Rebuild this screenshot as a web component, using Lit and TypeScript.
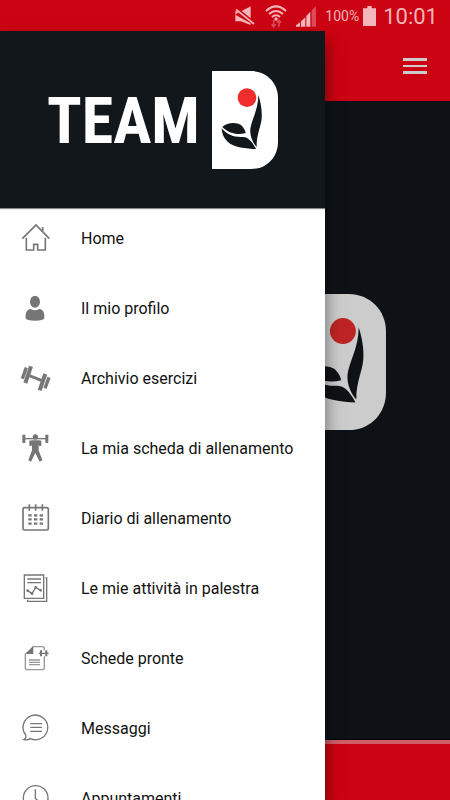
import { LitElement, html, svg, css, nothing } from "lit";
import { customElement, property } from "lit/decorators.js";

const menu = [
  { label: "Home", icon: svg`<path d="M4 47 45 6 85 47M16 44V81H38V64H50V81H73V44M65 12V26"/>` },
  {
    label: "Il mio profilo",
    icon: svg`<g class="solid"><ellipse cx="42" cy="26" rx="15" ry="18"/><path d="M14 76C13 57 18 49 29 48Q42 56 55 48C66 49 71 57 70 76Q68 83 42 83T14 76Z"/></g>`,
  },
  {
    label: "Archivio esercizi",
    icon: svg`<path stroke-width="10" d="M16 14 4 47"/><path stroke-width="12" d="M30 10 13 60M73 33 56 82"/><path stroke-width="9" d="M25 38 63 53"/><path stroke-width="10" d="M84 43 72 76"/>`,
  },
  {
    label: "La mia scheda di allenamento",
    icon: svg`<path stroke-width="4" d="M8 17H80"/><g class="solid"><rect x="4" y="5" width="9" height="25" rx="2"/><rect x="73" y="5" width="9" height="25" rx="2"/><circle cx="43" cy="12" r="8"/><path d="M25 23 33 22H53L61 23 61 38 55 40 53 34V52L64 82 56 86 43 60 30 86 22 82 33 52V34L31 40 25 38Z"/></g>`,
  },
  {
    label: "Diario di allenamento",
    icon: svg`<rect x="6" y="14" width="76" height="67" rx="5"/><path d="M25 4V23M44 4V23M64 4V23"/><path stroke-width="7" stroke-dasharray="10 7" d="M22 37H66M22 49H66M22 62H66"/>`,
  },
  {
    label: "Le mie attività in palestra",
    icon: svg`<g stroke-width="4"><path d="M10 6H68V76H10ZM73 15H77V85H20V80M19 18H60M19 29H60"/><path d="M20 53 33 62 44 43 59 52"/></g><g class="solid"><circle cx="20" cy="53" r="4"/><circle cx="33" cy="62" r="4"/><circle cx="44" cy="43" r="4"/><circle cx="59" cy="52" r="4"/></g>`,
  },
  {
    label: "Schede pronte",
    icon: svg`<path class="pale" d="M35 11H64Q70 11 70 16V22M70 40V74Q70 80 64 80H19Q13 80 13 74V32"/><path class="solid" d="M37 8V33H12Z"/><path stroke-width="4" d="M54 31H83"/><path stroke-width="6" d="M60 22V40M76 22V40"/><path class="pale" d="M24 51H57M24 58H57M24 65H57"/>`,
  },
  {
    label: "Messaggi",
    icon: svg`<path stroke-width="4" d="M14 66A37 37 0 1 1 28 77Q20 82 9 80 17 76 14 66ZM28 32H63M28 43H63M28 55H63"/>`,
  },
  {
    label: "Appuntamenti",
    icon: svg`<g stroke-width="4"><circle cx="44" cy="45" r="37"/><path d="M43 19V46L55 57"/></g>`,
  },
];

@customElement("team-logo")
class TeamLogo extends LitElement {
  @property() word = "";
  static styles = css`
    :host { display: block; flex: none; }
    .logo { display: block; width: 100%; height: auto; }
    .word { font: 700 64px "Roboto Condensed", "Liberation Sans Narrow", Roboto, sans-serif; }
    .plate, .word { fill: var(--plate, #fff); }
    .leaf { fill: var(--leaf, #12171c); }
    .sun { fill: var(--sun, #ef2d2d); }
  `;
  render() {
    return html`<svg class="logo" viewBox="0 0 231 98" role="img" aria-label="Team D">
      ${this.word ? svg`<text class="word" x="0" y="72">${this.word}</text>` : nothing}
      <svg x="165" y="0" width="66" height="98" viewBox="21 18 198 294">
        <path class="plate" d="M21 18H138C184 18 219 53 219 99V230C219 277 184 312 138 312H21Z" />
        <circle class="sun" cx="126" cy="98" r="28" />
        <path class="leaf" d="M160 90C166 108 172 135 170 160 168 185 154 210 155 246 145 235 134 215 136 192 139 165 160 135 160 90ZM52 186C65 172 95 170 108 180 118 190 121 198 122 204 100 210 75 208 52 186ZM50 190C65 208 85 217 112 216 130 214 145 235 153 252 125 251 85 247 68 230 55 218 51 205 50 190Z" />
      </svg>
    </svg>`;
  }
}

@customElement("status-bar")
class StatusBar extends LitElement {
  static styles = css`
    :host {
      display: flex; align-items: center; justify-content: flex-end; box-sizing: border-box;
      height: 31px; padding: 0 12px; background: #cc0312; color: #f2b6bb;
      font-family: Roboto, sans-serif;
    }
    svg { display: block; flex: none; fill: none; stroke: currentColor; margin-right: 9px; }
    .fill { fill: currentColor; stroke: none; }
    .dim { opacity: 0.4; }
    .percent { font-size: 14px; margin-right: 4px; }
    .battery { margin-right: 7px; }
    .clock { font-size: 22px; line-height: 32px; padding-top: 3px; }
  `;
  render() {
    return html`
      <svg width="22" height="24" viewBox="0 0 66 72" aria-label="Silenzioso">
        <path class="fill" d="M4 22H17L4 32ZM23 21 50 7V43ZM4 32V52H20L50 63V58Z" />
        <path stroke-width="5" d="M6 16 60 60" />
      </svg>
      <svg width="22" height="24" viewBox="0 0 66 72" aria-label="Wi-Fi">
        <path stroke-width="6" d="M3 21Q33-7 63 21M12 30Q33 12 54 30M21 39Q33 29 45 39" />
        <circle class="fill" cx="33" cy="45" r="5" />
        <path class="dim" stroke-width="5" d="M26 48V68M20 61 26 68 32 61M42 68V49M36 56 42 49 48 56" />
      </svg>
      <svg width="20" height="24" viewBox="0 0 60 72" aria-label="Segnale">
        <path class="fill" d="M0 68V64L12 55V68ZM15 68V52L28 40V68ZM31 68V36L43 23V68Z" />
        <path class="fill dim" d="M47 68V19L60 7V68Z" />
      </svg>
      <span class="percent">100%</span>
      <svg class="battery" width="13" height="20" viewBox="0 0 39 60" aria-label="Batteria">
        <path class="fill" d="M0 7H13V0H26V7H39V60H0Z" />
      </svg>
      <time class="clock">10:01</time>
    `;
  }
}

@customElement("app-root")
class AppRoot extends LitElement {
  static styles = css`
    :host {
      display: flex; flex-direction: column; position: relative; height: 100vh; overflow: hidden;
      background: #0e1216; font-family: Roboto, sans-serif;
    }
    .bar {
      display: flex; flex: none; align-items: center; justify-content: flex-end;
      height: 70px; padding: 0 23px; background: #cc0312;
    }
    .burger { padding: 0; border: 0; background: none; color: #ccc; }
    .burger svg { display: block; fill: currentColor; }
    .stage {
      flex: 1; display: flex; align-items: center; justify-content: center;
      border-bottom: 1px solid #000;
    }
    .stage team-logo {
      width: 321px; margin-bottom: 116px;
      --plate: #ccc; --leaf: #0e1216; --sun: #bf2424;
    }
    .foot { flex: none; height: 56px; border-top: 4px solid #d05e69; background: #cc0312; }
    .drawer {
      position: absolute; top: 31px; bottom: 0; left: 0; width: calc(100% - 125px);
      display: flex; flex-direction: column; overflow: hidden;
      background: #fff; box-shadow: 0 10px 16px rgba(0, 0, 0, 0.5);
    }
    .brand {
      display: flex; flex: none; align-items: center; justify-content: center;
      height: 177px; background: #12171c; box-shadow: 0 1px 1px #888;
    }
    .brand team-logo { width: 231px; }
    .list { display: flex; flex-direction: column; gap: 10px; margin: 0; padding: 0; list-style: none; }
    .item {
      display: flex; align-items: center; gap: 30px; height: 60px; padding-left: 21px;
      color: #111; font-size: 16px; text-decoration: none; white-space: nowrap;
    }
    .icon { flex: none; width: 30px; height: 30px; fill: none; stroke: #777; stroke-width: 5; }
    .icon .solid { fill: #757575; stroke: none; }
    .icon .pale { stroke: #999; stroke-width: 4; }
  `;
  render() {
    return html`
      <status-bar></status-bar>
      <header class="bar">
        <button class="burger" aria-label="Menu">
          <svg width="24" height="16" viewBox="0 0 24 16"><path d="M0 0H24V3H0ZM0 7H24V9H0ZM0 13H24V16H0Z" /></svg>
        </button>
      </header>
      <main class="stage"><team-logo></team-logo></main>
      <footer class="foot"></footer>
      <aside class="drawer">
        <div class="brand"><team-logo word="TEAM"></team-logo></div>
        <nav>
          <ul class="list">
            ${menu.map(
              (m) => html`<li>
                <a class="item" href="#"><svg class="icon" viewBox="0 0 90 90" aria-hidden="true">${m.icon}</svg>${m.label}</a>
              </li>`
            )}
          </ul>
        </nav>
      </aside>
    `;
  }
}
